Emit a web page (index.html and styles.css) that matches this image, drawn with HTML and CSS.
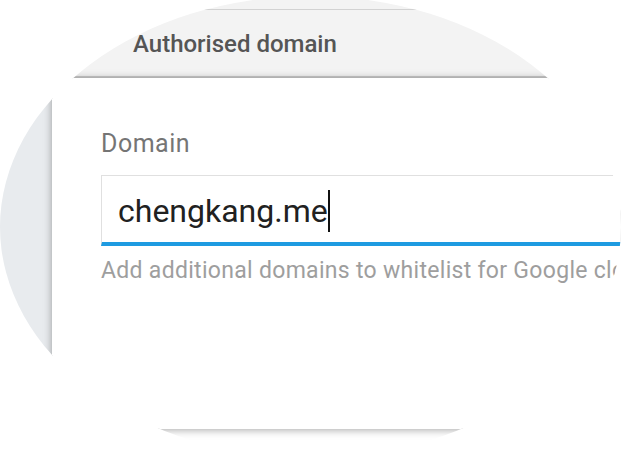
FILE: index.html
```html
<!DOCTYPE html>
<html lang="en">
<head>
  <meta charset="UTF-8">
  <title>Authorised domain</title>
  <link rel="stylesheet" href="styles.css">
</head>
<body>
  <div class="lens">
    <div class="prev-row"></div>
    <div class="table-head">Authorised domain</div>

    <div class="content">
      <div class="page-bg"></div>
      <div class="panel">
        <label class="field-label" for="domain">Domain</label>
        <div class="field">
          <span class="field-value">chengkang.me</span><span class="caret"></span>
        </div>
        <div class="field-hint">Add additional domains to whitelist for Google cloud sign-in</div>
      </div>
    </div>
  </div>
</body>
</html>
```

FILE: styles.css
```css
* {
  margin: 0;
  padding: 0;
  box-sizing: border-box;
}

body {
  font-family: Roboto, 'Liberation Sans', sans-serif;
  background: #fff;
  width: 622px;
  height: 458px;
  overflow: hidden;
}

/* the magnified view is an ellipse filling the window */
.lens {
  width: 621px;
  height: 462px;
  margin-top: -4px;
  border-radius: 50%;
  overflow: hidden;
  background: #fff;
  display: flex;
  flex-direction: column;
}

.prev-row {
  height: 14px;
  background: #f3f3f3;
  border-bottom: 1px solid #d2d2d2;
}

.table-head {
  height: 68px;
  padding-left: 133px;
  background: #f3f3f3;
  border-bottom: 2px solid #cbcbcb;
  color: #555;
  font-size: 24px;
  font-weight: 500;
  line-height: 68px;
}

.content {
  display: flex;
  height: 351px;
}

.page-bg {
  width: 52px;
  background: #e8ebee;
}

.panel {
  flex: 1;
  background: #fff;
  padding: 51px 0 0 49px;
  box-shadow: 0 1px 8px rgba(0, 0, 0, 0.35);
  overflow: hidden;
}

.field-label {
  display: block;
  color: #757575;
  font-size: 25px;
  line-height: 30px;
  letter-spacing: 0.5px;
}

.field {
  margin-top: 16px;
  height: 71px;
  padding-left: 16px;
  border: 1px solid #e0e0e0;
  border-right: none;
  border-bottom: 4px solid #1e9be1;
  display: flex;
  align-items: center;
  padding-top: 4px;
  white-space: nowrap;
}

.field-value {
  color: #212121;
  font-size: 32px;
}

.caret {
  width: 2px;
  height: 42px;
  background: #111;
}

.field-hint {
  margin-top: 11px;
  color: #9e9e9e;
  font-size: 23px;
  letter-spacing: 0.3px;
  white-space: nowrap;
}
```
